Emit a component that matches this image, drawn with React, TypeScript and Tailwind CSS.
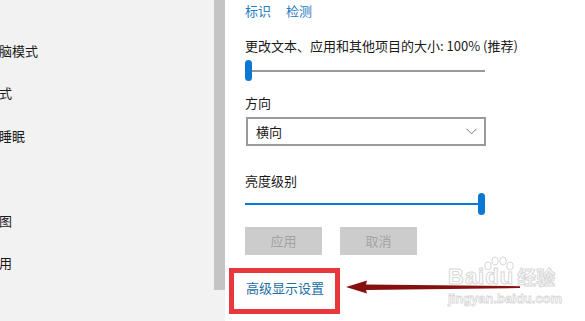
import React from "react";

const navItems = ["平板电脑模式", "节电模式", "电源和睡眠", "存储", "脱机地图", "默认应用"];

export default function App() {
  return (
    <div
      className="w-[585px] h-[321px] flex overflow-hidden bg-white text-[13px] text-[#1a1a1a]"
      style={{ fontFamily: '"Noto Sans CJK SC", "Noto Sans", sans-serif' }}
    >
      {/* Left navigation */}
      <div className="w-[225px] h-full bg-[#f2f2f2] flex shrink-0">
        <div className="flex-1 overflow-hidden">
          <div className="ml-[-40px] pt-[41px] flex flex-col">
            {navItems.map((t) => (
              <div key={t} className="h-[42.4px] leading-[20px] whitespace-nowrap">
                {t}
              </div>
            ))}
          </div>
        </div>
        <div className="w-[11px] h-[290px] bg-[#c4c4c4]" />
      </div>

      {/* Right content */}
      <div className="relative flex-1 h-full pl-[20px]">
        <div className="flex gap-[15px] h-[21px] leading-[21px] text-[#2a7bbf]">
          <span>标识</span>
          <span>检测</span>
        </div>

        <div className="mt-[15px] h-[20px] leading-[20px] whitespace-nowrap">
          更改文本、应用和其他项目的大小: 100% (推荐)
        </div>

        {/* slider 1 */}
        <div className="mt-[4px] relative w-[240px] h-[21px] flex items-center">
          <div className="w-full h-[2px] bg-[#999999]" />
          <div className="absolute left-0 top-0 w-[7px] h-[21px] rounded-full bg-[#0b78d4]" />
        </div>

        <div className="mt-[11px] h-[21px] leading-[21px]">方向</div>

        {/* dropdown */}
        <div className="mt-[4px] ml-[1px] w-[240px] h-[29px] border-2 border-[#9a9a9a] flex items-center justify-between pl-[8px] pr-[7px]">
          <span className="leading-[20px]">横向</span>
          <svg width="11" height="7" viewBox="0 0 11 7">
            <polyline points="0.5,0.8 5.5,5.8 10.5,0.8" fill="none" stroke="#7a7a7a" strokeWidth="1" />
          </svg>
        </div>

        <div className="mt-[24px] h-[21px] leading-[21px]">亮度级别</div>

        {/* slider 2 */}
        <div className="mt-[2px] relative w-[240px] h-[22px] flex items-center">
          <div className="w-[236px] h-[2px] bg-[#0b78d4]" />
          <div className="absolute right-0 top-0 w-[7px] h-[22px] rounded-full bg-[#0b78d4]" />
        </div>

        {/* buttons */}
        <div className="mt-[12px] flex gap-[18px]">
          <div className="w-[77px] h-[28px] bg-[#cccccc] text-[#a3a3a3] flex items-center justify-center">应用</div>
          <div className="w-[77px] h-[28px] bg-[#cccccc] text-[#a3a3a3] flex items-center justify-center">取消</div>
        </div>

        <div className="mt-[22px] ml-[1px] h-[21px] leading-[21px] text-[#236fa6]">高级显示设置</div>

        {/* red annotation box */}
        <div className="absolute left-[4px] top-[268px] w-[111px] h-[46px] border-[5px] border-[#e8383d]" />

        {/* arrow */}
        <svg className="absolute left-[120px] top-[278px]" width="180" height="18" viewBox="0 0 180 18">
          <polygon points="1,9 22,2.5 21,6.5 175,8.2 175,10 21,12 22,15.5" fill="#86100f" />
        </svg>

        {/* watermark */}
        <div className="absolute left-[223px] top-[256px] flex flex-col items-start opacity-90">
          <div className="relative flex items-end h-[32px] font-bold text-white [-webkit-text-stroke:1px_#d4d4d4]" style={{ fontFamily: '"Liberation Sans", Arial, sans-serif' }}>
            <span className="text-[22px] leading-[22px] tracking-[1px]">Baidu</span>
            <span className="text-[19px] leading-[22px] ml-[3px]" style={{ fontFamily: '"Noto Sans CJK SC", sans-serif' }}>经验</span>
            <svg className="absolute left-[34px] top-0" width="34" height="26" viewBox="0 0 34 26">
              <g fill="white" stroke="#d4d4d4" strokeWidth="1">
                <ellipse cx="6" cy="10" rx="3.2" ry="4" />
                <ellipse cx="13" cy="5" rx="3.2" ry="4" />
                <ellipse cx="21" cy="5" rx="3.2" ry="4" />
                <ellipse cx="28" cy="10" rx="3.2" ry="4" />
              </g>
            </svg>
          </div>
          <div className="text-[13px] leading-[14px] font-bold text-white [-webkit-text-stroke:0.8px_#d4d4d4] mt-[4px]" style={{ fontFamily: '"Liberation Sans", Arial, sans-serif' }}>
            jingyan.baidu.com
          </div>
        </div>
      </div>
    </div>
  );
}
